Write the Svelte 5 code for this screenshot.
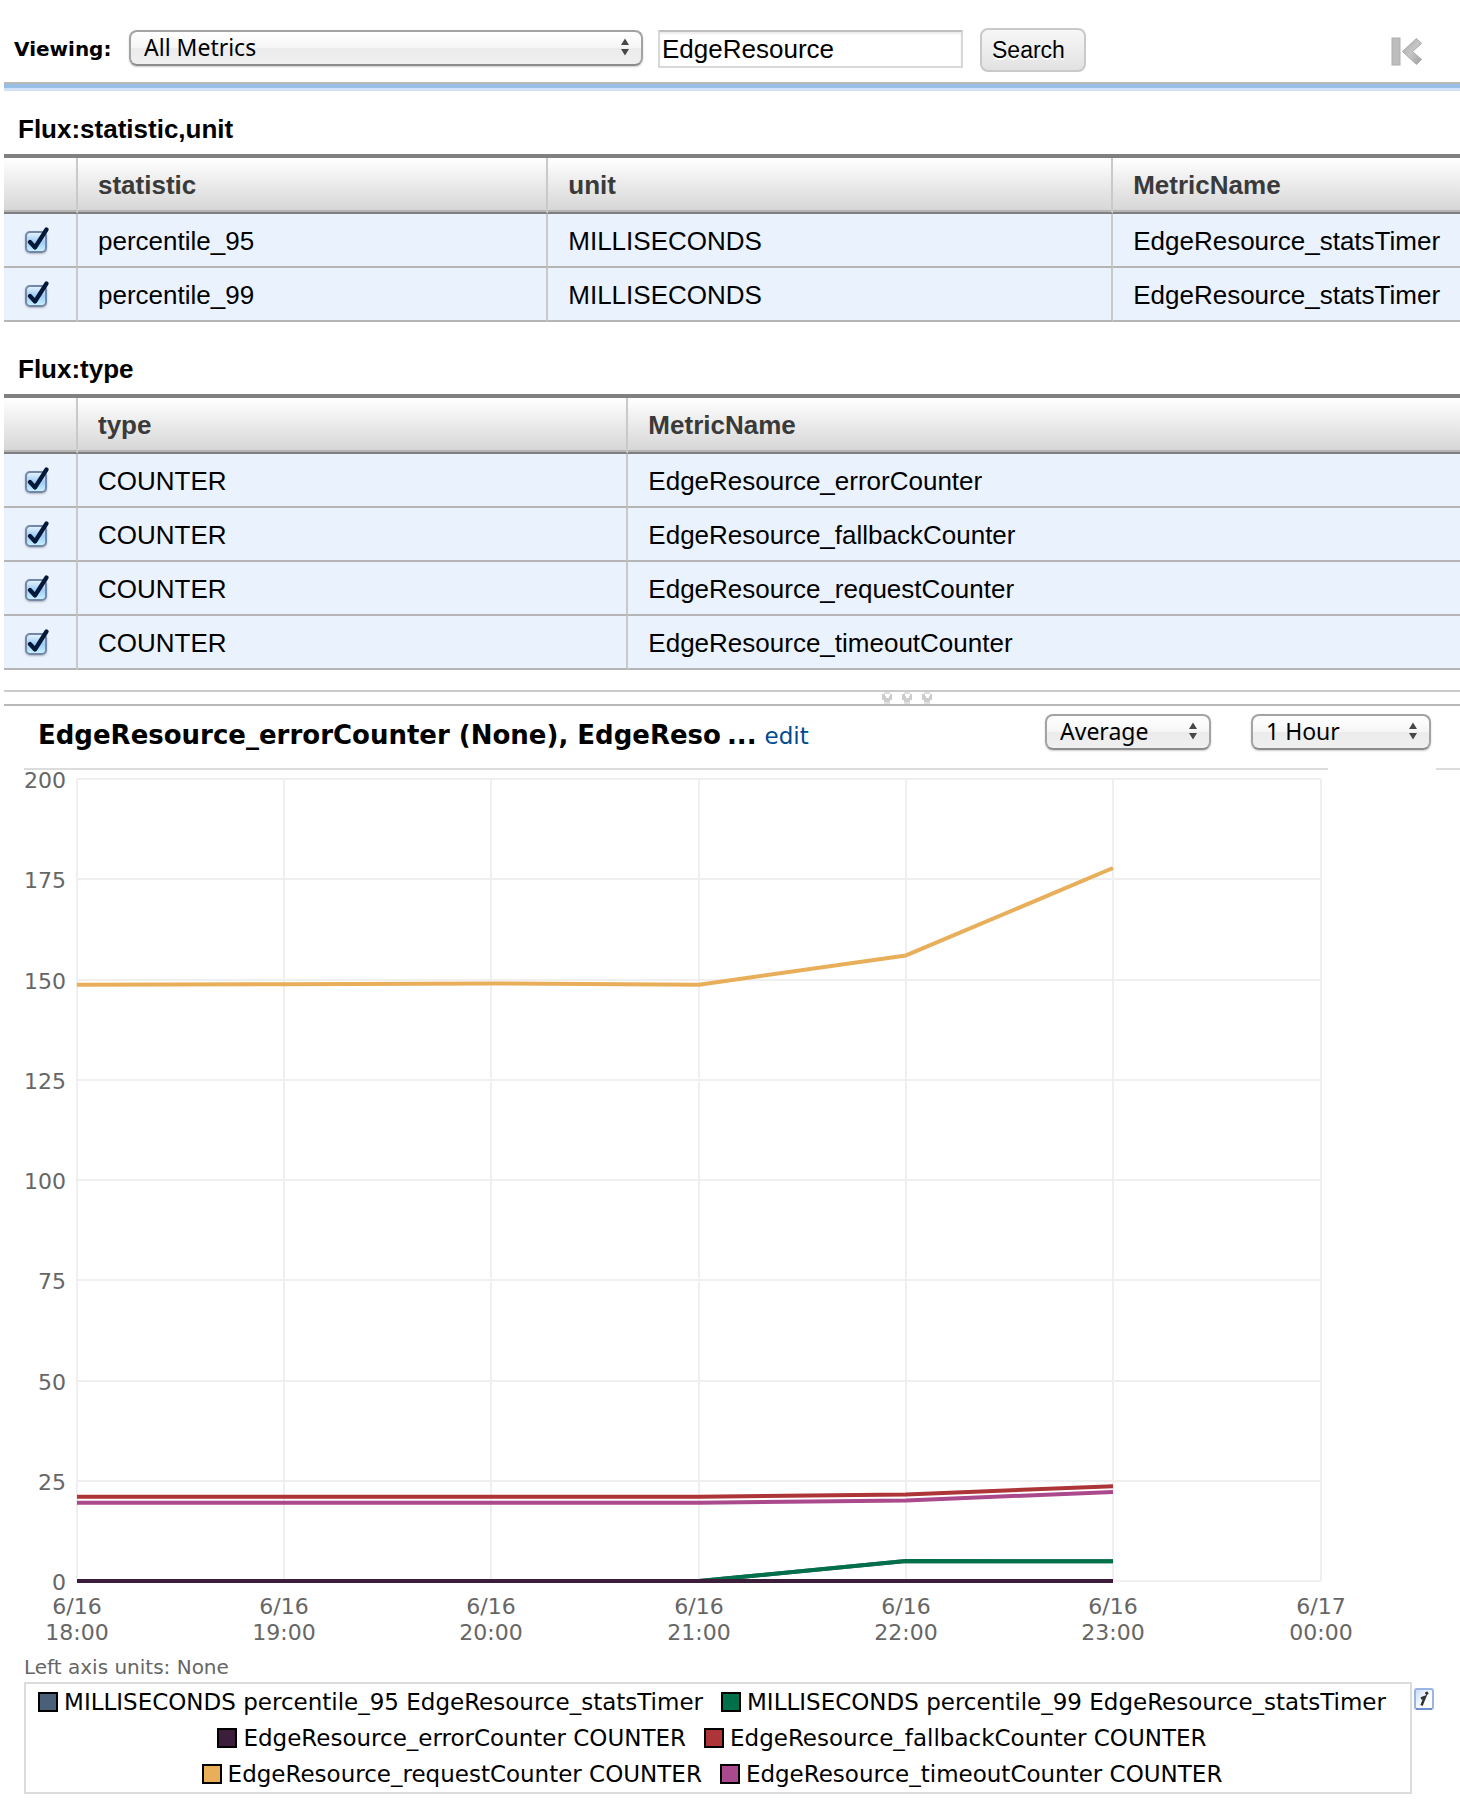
<script>
  const groups = [
    {
      title: 'Flux:statistic,unit',
      columns: ['statistic', 'unit', 'MetricName'],
      widths: ['32.3%', '38.8%', 'auto'],
      rows: [
        ['percentile_95', 'MILLISECONDS', 'EdgeResource_statsTimer'],
        ['percentile_99', 'MILLISECONDS', 'EdgeResource_statsTimer']
      ]
    },
    {
      title: 'Flux:type',
      columns: ['type', 'MetricName'],
      widths: ['37.8%', 'auto'],
      rows: [
        ['COUNTER', 'EdgeResource_errorCounter'],
        ['COUNTER', 'EdgeResource_fallbackCounter'],
        ['COUNTER', 'EdgeResource_requestCounter'],
        ['COUNTER', 'EdgeResource_timeoutCounter']
      ]
    }
  ];

  const series = [
    { name: 'MILLISECONDS percentile_95 EdgeResource_statsTimer', color: '#4a5f78', values: [0, 0, 0, 0, 5, 4.9] },
    { name: 'MILLISECONDS percentile_99 EdgeResource_statsTimer', color: '#00704a', values: [0, 0, 0, 0, 5, 4.9] },
    { name: 'EdgeResource_errorCounter COUNTER', color: '#3c1d3c', values: [0, 0, 0, 0, 0, 0] },
    { name: 'EdgeResource_fallbackCounter COUNTER', color: '#ad3437', values: [21, 21, 21, 21, 21.6, 23.6] },
    { name: 'EdgeResource_requestCounter COUNTER', color: '#e8ae5a', values: [148.7, 148.8, 149, 148.7, 156, 177.8] },
    { name: 'EdgeResource_timeoutCounter COUNTER', color: '#aa4a8c', values: [19.5, 19.5, 19.5, 19.5, 20.1, 22.2] }
  ];
  const drawOrder = [0, 1, 5, 3, 4, 2];

  const yTicks = [200, 175, 150, 125, 100, 75, 50, 25, 0];
  const xTicks = [
    ['6/16', '18:00'],
    ['6/16', '19:00'],
    ['6/16', '20:00'],
    ['6/16', '21:00'],
    ['6/16', '22:00'],
    ['6/16', '23:00'],
    ['6/17', '00:00']
  ];
  const plot = { left: 53, top: 9, right: 1297, bottom: 811 };
  const px = (i) => Math.floor(plot.left + (i * (plot.right - plot.left)) / 6);
  const py = (v) => plot.bottom - (v * (plot.bottom - plot.top)) / 200;
  const gridY = (v) => Math.round(py(v));
  const points = (values) => values.map((v, i) => `${px(i)},${py(v)}`).join(' ');

  let query = $state('EdgeResource');
</script>

{#snippet arrows()}
  <svg class="arrows" width="10" height="18" viewBox="0 0 10 18" aria-hidden="true">
    <path d="M5 0.5 L9 7 H1 Z M5 17.5 L9 11 H1 Z" fill="#474747" />
  </svg>
{/snippet}

<main>
  <form class="toolbar" onsubmit={(e) => e.preventDefault()}>
    <label class="viewing" for="scope">Viewing:</label>
    <span class="picker scope">
      <select id="scope"><option>All Metrics</option></select>
      {@render arrows()}
    </span>
    <input class="query" type="text" aria-label="Search metrics" bind:value={query} />
    <button class="search" type="submit">Search</button>
    <button class="first" type="button" aria-label="Collapse panel">
      <svg width="32" height="30" viewBox="0 0 32 30">
        <defs>
          <linearGradient id="metal" x1="0" y1="0" x2="1" y2="1">
            <stop offset="0" stop-color="#a8a8a8" />
            <stop offset="0.5" stop-color="#c6c6c6" />
            <stop offset="1" stop-color="#a0a0a0" />
          </linearGradient>
        </defs>
        <rect x="1" y="1" width="8" height="27" fill="#bdbdbd" stroke="#adadad" />
        <path d="M25.500 1.500 L30.500 6.500 L21.500 14.500 L30.500 22.500 L25.500 27.500 L11.500 14.500 Z" fill="url(#metal)" stroke="#a8a8a8" stroke-linejoin="round" />
      </svg>
    </button>
  </form>

  {#each groups as group}
    <section class="group">
      <h2>{group.title}</h2>
      <table>
        <colgroup>
          <col class="pick" />
          {#each group.widths as width}<col style:width />{/each}
        </colgroup>
        <thead>
          <tr>
            <th></th>
            {#each group.columns as column}<th scope="col">{column}</th>{/each}
          </tr>
        </thead>
        <tbody>
          {#each group.rows as row}
            <tr>
              <td>
                <label class="tick">
                  <input type="checkbox" checked aria-label={row.join(' ')} />
                  <svg width="26" height="28" viewBox="0 0 26 28" aria-hidden="true">
                    <path d="M6 15 L11 20.500 L22.500 2.500" fill="none" stroke="#04193a" stroke-width="4.200" stroke-linecap="round" stroke-linejoin="round" />
                  </svg>
                </label>
              </td>
              {#each row as cell}<td>{cell}</td>{/each}
            </tr>
          {/each}
        </tbody>
      </table>
    </section>
  {/each}

  <div class="splitter">
    <svg width="52" height="12" viewBox="0 0 52 12" aria-hidden="true">
      {#each [0, 20, 40] as x}
        <g transform="translate({x} 0)">
          <path d="M2 0 H8 V2 H10 V8 H8 V12 H2 V8 H0 V2 H2 Z" fill="#cdcdcd" />
          <path d="M2 0 H8 V2 H2 Z M2 10 H8 V12 H2 Z" fill="#e0e0e0" />
          <path d="M3 2 H8 V4 H7 V6 H4 V4 H3 Z" fill="#fff" />
        </g>
      {/each}
    </svg>
  </div>

  <section class="chart">
    <header>
      <h1><span>EdgeResource_errorCounter (None), EdgeReso</span><span>...</span></h1>
      <a href="#edit">edit</a>
      <span class="picker statistic">
        <select aria-label="Statistic"><option>Average</option></select>
        {@render arrows()}
      </span>
      <span class="picker period">
        <select aria-label="Period"><option>1 Hour</option></select>
        {@render arrows()}
      </span>
    </header>
    <div class="rules"><i></i><i></i></div>

    <svg class="plot" viewBox="0 0 1436 885" role="img" aria-label="Metric values over time">
      <g class="grid">
        {#each yTicks as v}<line x1={plot.left} x2={plot.right} y1={gridY(v)} y2={gridY(v)} />{/each}
        {#each xTicks as _, i}<line x1={px(i)} x2={px(i)} y1={plot.top} y2={plot.bottom} />{/each}
      </g>
      {#each drawOrder as index}
        <polyline class="series" points={points(series[index].values)} stroke={series[index].color} />
      {/each}
      <g class="ylabels">
        {#each yTicks as v}<text x="42" y={gridY(v) + 9}>{v}</text>{/each}
      </g>
      <g class="xlabels">
        {#each xTicks as [day, hour], i}
          <text x={px(i)} y="844">{day}</text>
          <text x={px(i)} y="870">{hour}</text>
        {/each}
      </g>
    </svg>

    <p class="units">Left axis units: None</p>
    <div class="footer">
      <ul>
        {#each series as s}
          <li><i style:background={s.color}></i>{s.name}</li>
        {/each}
      </ul>
      <button class="info" type="button" aria-label="Chart information">
        <svg width="20" height="23" viewBox="0 0 20 23">
          <defs>
            <linearGradient id="glass" x1="0" y1="0" x2="1" y2="1">
              <stop offset="0" stop-color="#c5dcf8" />
              <stop offset="0.6" stop-color="#ffffff" />
            </linearGradient>
          </defs>
          <rect x="1" y="1" width="18" height="20" rx="2" fill="url(#glass)" stroke="#9ab5e6" stroke-width="2" />
          <path d="M2 21 H18" stroke="#6f8fca" stroke-width="2" />
          <path d="M11.500 6 L14 4.500" stroke="#333" stroke-width="3" />
          <path d="M7 10.500 L11 9 L7.500 17.500" fill="none" stroke="#333" stroke-width="2.500" />
        </svg>
      </button>
    </div>
  </section>
</main>

<style>
  :global(body) {
    margin: 0;
    background: #fff;
  }
  main {
    padding-left: 4px;
    font-family: 'Liberation Sans', Arial, sans-serif;
    font-size: 26px;
    color: #000;
  }
  main * {
    box-sizing: border-box;
  }
  svg {
    display: block;
  }
  h1,
  h2,
  p,
  ul {
    margin: 0;
    padding: 0;
  }
  button {
    padding: 0;
    border: 0;
    background: none;
  }

  .toolbar {
    display: flex;
    align-items: center;
    height: 91px;
    padding: 14px 37px 4px 10px;
    border-bottom: 3px solid #d2e2f6;
    box-shadow: inset 0 -4px #97bfe6, inset 0 -6px #b9b9b9;
  }
  .viewing {
    width: 115px;
    font: bold 20px 'DejaVu Sans', Verdana, sans-serif;
  }
  .picker {
    position: relative;
    display: block;
    height: 36px;
  }
  .picker select {
    appearance: none;
    display: block;
    width: 100%;
    height: 36px;
    padding: 0 30px 2px 13px;
    border: 2px solid #a3a3a3;
    border-bottom-color: #8c8c8c;
    border-radius: 8px;
    background: linear-gradient(#fff, #f6f6f6 48%, #ebebeb 52%, #f0f0f0);
    box-shadow: 0 1px 2px #0003;
    font: 23px 'Noto Sans', 'Open Sans', sans-serif;
    line-height: 30px;
    color: #000;
  }
  .arrows {
    position: absolute;
    top: 8px;
    right: 13px;
    pointer-events: none;
  }
  .scope {
    width: 514px;
    margin-bottom: 2px;
  }
  .query {
    width: 305px;
    height: 38px;
    margin: 0 17px 0 15px;
    padding: 0 2px;
    border: 2px solid #d8d8d8;
    border-top-color: #bebebe;
    border-radius: 0;
    box-shadow: inset 0 2px 2px #00000014;
    font: 26px 'Liberation Sans', Arial, sans-serif;
    color: #000;
  }
  .search {
    width: 106px;
    height: 44px;
    margin-top: 2px;
    padding: 0 10px;
    border: 2px solid #c9c9c9;
    border-radius: 8px;
    background: linear-gradient(#f7f7f7, #e2e2e2);
    font: 23px 'Liberation Sans', Arial, sans-serif;
    text-align: left;
    color: #000;
    text-shadow: 0 2px #fff;
  }
  .first {
    margin-left: auto;
    padding-top: 6px;
  }

  .group {
    padding-bottom: 9px;
  }
  h2 {
    padding: 23px 14px 10px;
    font-size: 26px;
    line-height: 30px;
  }
  table {
    width: 100%;
    table-layout: fixed;
    border-collapse: separate;
    border-spacing: 0;
    border-top: 4px solid #808080;
  }
  .pick {
    width: 74px;
  }
  th,
  td {
    padding: 0 0 0 20px;
    text-align: left;
    white-space: nowrap;
    border-right: 2px solid #c9c9c9;
  }
  th:last-child,
  td:last-child {
    border-right: 0;
  }
  th {
    height: 56px;
    border-bottom: 2px solid #7f7f7f;
    background: linear-gradient(#fff, #d5d5d6);
    box-shadow: inset 0 -2px #b5b5b5;
    color: #3a3a3a;
  }
  td {
    height: 54px;
    padding-top: 2px;
    border-bottom: 2px solid #b5b5b5;
    background: #eaf2fe;
  }
  .tick {
    position: relative;
    display: block;
    width: 26px;
    height: 28px;
    padding: 4px 0 0 1px;
  }
  .tick input {
    appearance: none;
    display: block;
    width: 22px;
    height: 22px;
    margin: 0;
    border: 2px solid #7387a8;
    border-radius: 5px;
    background: linear-gradient(#e3f1fd, #9ccbf8 50%, #c8f0ff);
    box-shadow: 0 1px 2px #0004;
  }
  .tick svg {
    position: absolute;
    top: 0;
    left: 0;
    pointer-events: none;
  }

  .splitter {
    display: flex;
    justify-content: center;
    height: 16px;
    margin-top: 11px;
    padding-left: 352px;
    border-top: 2px solid #cbcbcb;
    border-bottom: 2px solid #b8b8b8;
  }

  .chart {
    padding-left: 20px;
    font-family: 'DejaVu Sans', Verdana, sans-serif;
  }
  .chart header {
    display: flex;
    align-items: center;
    height: 52px;
    margin-bottom: 10px;
    padding: 0 29px 0 14px;
  }
  h1 {
    display: flex;
    gap: 6px;
    padding-top: 6px;
    font-size: 26px;
    line-height: 30px;
    white-space: nowrap;
  }
  .chart a {
    margin: 0 auto 0 8px;
    padding-top: 8px;
    font-size: 23px;
    line-height: 30px;
    color: #004b91;
    text-decoration: none;
  }
  .statistic {
    width: 166px;
    margin-right: 40px;
  }
  .period {
    width: 180px;
  }
  .rules {
    display: flex;
    gap: 108px;
    height: 2px;
  }
  .rules i {
    flex: 1;
    background: #dcdcdc;
  }
  .rules i:last-child {
    flex: 0 0 24px;
  }
  .plot {
    width: 100%;
    height: auto;
    overflow: visible;
    font-size: 22px;
  }
  .grid line {
    stroke: #efefef;
    stroke-width: 2;
  }
  .series {
    fill: none;
    stroke-width: 4;
    stroke-linejoin: round;
  }
  .ylabels {
    fill: #666;
    text-anchor: end;
  }
  .xlabels {
    fill: #666;
    text-anchor: middle;
  }
  .units {
    margin-bottom: 3px;
    font-size: 20px;
    line-height: 24px;
    color: #666;
  }
  .footer {
    display: flex;
    align-items: flex-start;
    padding-right: 26px;
  }
  .footer ul {
    flex: 1;
    display: flex;
    flex-wrap: wrap;
    justify-content: center;
    column-gap: 18px;
    padding-right: 12px;
    border: 2px solid #dcdcdc;
    list-style: none;
  }
  .footer li {
    display: flex;
    align-items: center;
    gap: 6px;
    font-size: 23px;
    line-height: 36px;
    white-space: nowrap;
  }
  .footer li i {
    width: 20px;
    height: 20px;
    border: 2px solid #000;
  }
  .info {
    margin: 6px 0 0 2px;
  }
</style>
